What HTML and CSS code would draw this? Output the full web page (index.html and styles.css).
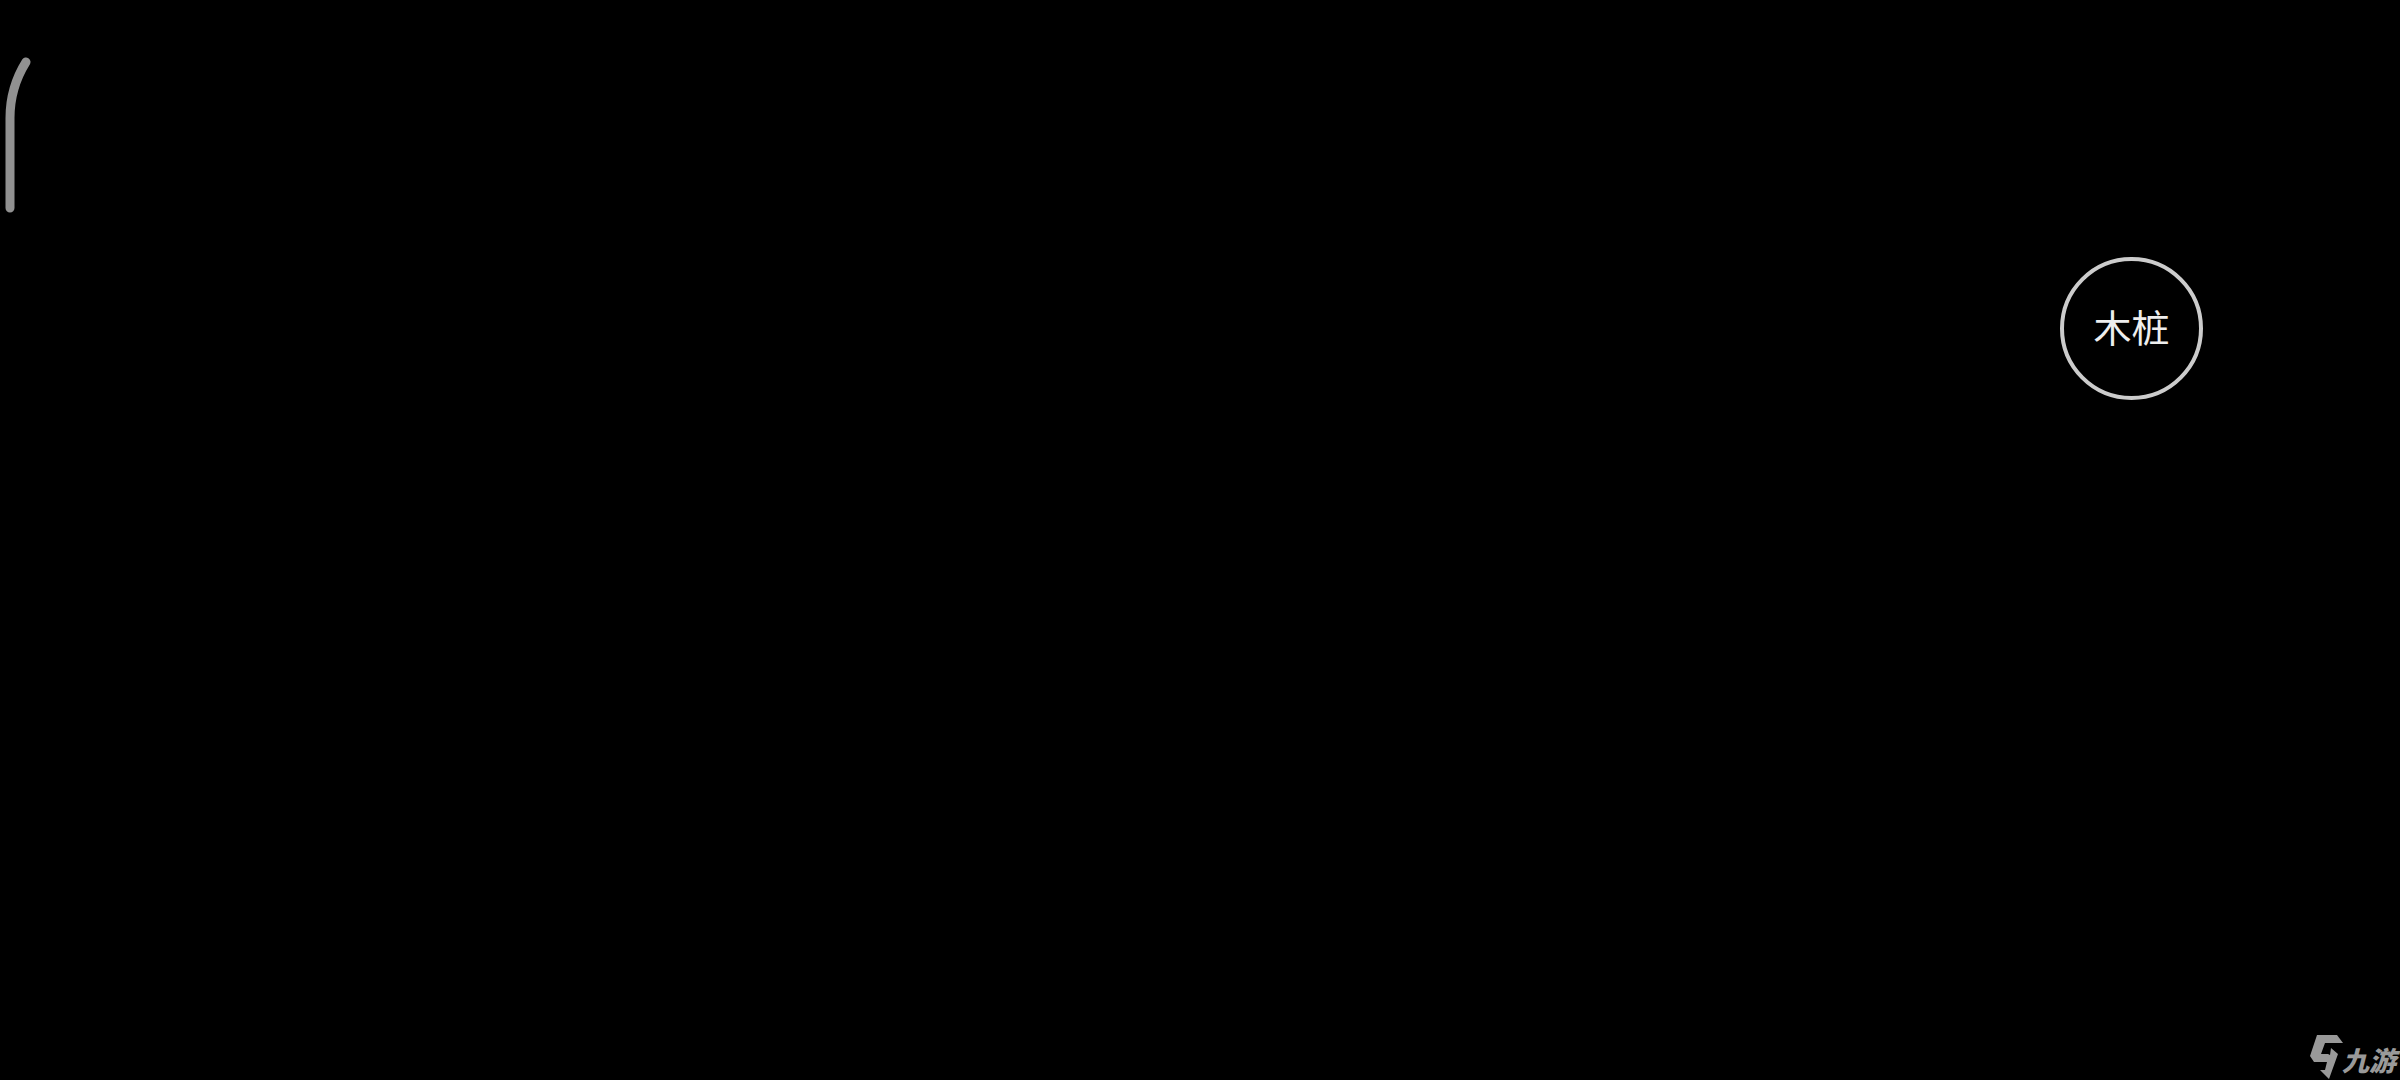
FILE: index.html
```html
<!DOCTYPE html>
<html lang="zh-CN">
 <head>
     <meta charset="UTF-8">
     <title>木桩</title>
     <link rel="stylesheet" href="styles.css">
 </head>
 <body>
    <main>
      <svg class="handle" width="32" height="160" viewBox="0 0 32 160" aria-hidden="true">
        <path d="M26 6C16 22 10 41 10 62V152"/>
      </svg>
      <button class="stake" type="button">木桩</button>
    </main>
    <footer>
      <svg class="logo" width="32" height="46" viewBox="0 0 32 46" aria-hidden="true">
        <path d="M7 1H27L33 9H15L11 20H18L20 21L21 14L28 20L19 45L10 36H15L17 28H4L0 22Z"/>
      </svg>
      <span class="brand">九游</span>
    </footer>
 </body>
</html>
```
FILE: styles.css
```css
* {box-sizing:border-box;}
body {margin:0; min-height:100vh; display:flex; flex-direction:column; justify-content:space-between; background-color:#000000; font-family:"Noto Sans CJK SC", sans-serif;}
main {display:flex; justify-content:space-between; align-items:flex-start; padding-top:56px;}
.handle path {fill:none; stroke:#919191; stroke-width:9; stroke-linecap:round;}
.stake {height:143px; width:143px; margin:201px 197px 0 0; padding:0 0 6px; border:4px solid #cccccc; border-radius:50%; background-color:#000000; color:#eeeeee; font-family:inherit; font-size:38px; line-height:56px;}
footer {display:flex; justify-content:flex-end; align-items:flex-end; padding-right:4px;}
.logo {overflow:visible;}
.logo path {fill:#999999;}
.brand {color:#999999; font-size:27px; font-weight:900; font-style:italic; line-height:40px;}
```
